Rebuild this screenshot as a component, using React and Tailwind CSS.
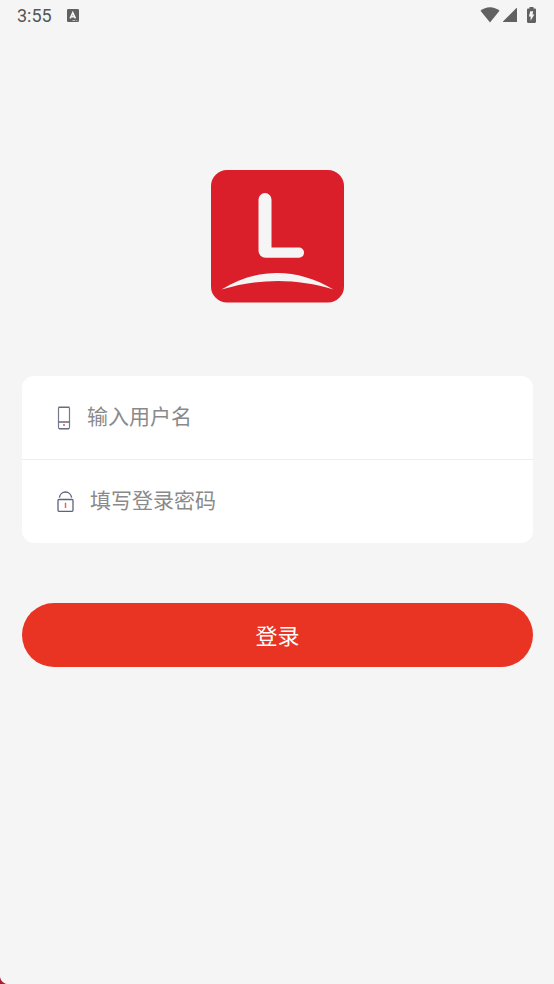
import { useState } from 'react';

const WifiIcon = () => (
  <svg className="h-4 w-5" viewBox="0 0 20 16" fill="#616161" aria-hidden="true">
    <path d="M10 15.5 0.5 3.7C3.2 1.4 6.4 0.2 10 0.2s6.8 1.2 9.5 3.5z" />
  </svg>
);

const SignalIcon = () => (
  <svg className="h-4 w-4" viewBox="0 0 16 16" fill="#616161" aria-hidden="true">
    <path d="M14.2 1.2c.4-.4.8-.3.8.3V15H1.6c-.6 0-.8-.3-.4-.7z" />
  </svg>
);

const BatteryIcon = () => (
  <svg className="h-4 w-[9px]" viewBox="0 0 9 16" aria-hidden="true">
    <path
      d="M2.5 0h4v1.6h1.3c.7 0 1.2.5 1.2 1.1v12.1c0 .7-.5 1.2-1.2 1.2H1.2C.5 16 0 15.5 0 14.8V2.7c0-.6.5-1.1 1.2-1.1h1.3z"
      fill="#616161"
    />
    <path d="M3.2 4.2h3L5.5 7.4h1.8L3.6 13.8V9.6H1.9z" fill="#f4f4f4" />
  </svg>
);

const KeyboardIcon = () => (
  <svg className="h-[13px] w-3" viewBox="0 0 12 13" aria-hidden="true">
    <rect width="12" height="13" rx="1.3" fill="#616161" />
    <path d="M3.2 9.4 5.8 3.6 8.4 9.4M4.2 7.6h3.2" fill="none" stroke="#f4f4f4" strokeWidth="1.6" />
    <path d="M5.5 11.5h2.7M9.3 11.5h1" stroke="#d0d0d0" strokeWidth="0.8" />
  </svg>
);

const Logo = () => (
  <svg className="h-[133px] w-[133px]" viewBox="0 0 133 133" role="img" aria-label="Logo">
    <rect width="133" height="132.5" rx="16" fill="#da1f2a" />
    <path
      d="M47.5 29.5a6.5 6.5 0 0 1 13 0V77.5H88a5.1 5.1 0 0 1 0 10.2H54.5a7 7 0 0 1-7-7z"
      fill="#f5f5f5"
    />
    <path d="M10.5 119.5C46 97.5 86 97.5 122.5 119.5C86 108 48 108 10.5 119.5z" fill="#f5f5f5" />
  </svg>
);

const PhoneIcon = () => (
  <svg className="h-6 w-[14px] shrink-0" viewBox="0 0 14 24" fill="none" aria-hidden="true">
    <rect x="1.5" y="1.5" width="11" height="21" rx="1" stroke="#757a8d" strokeWidth="1.2" />
    <path d="M1.5 1.3h11M1.5 16h11M2 22.7h10" stroke="#666b80" strokeWidth="1.5" />
    <rect x="6" y="18" width="2" height="2" fill="#e58078" />
  </svg>
);

const LockIcon = () => (
  <svg className="h-6 w-[17px] shrink-0" viewBox="0 0 17 24" fill="none" aria-hidden="true">
    <path d="M2.4 7.6C2.8 4.5 5.3 2 8.5 2s5.7 2.5 6.1 5.6" stroke="#5d6379" strokeWidth="1.3" />
    <rect x="1" y="9.5" width="15" height="11.8" rx="1" stroke="#5d6379" strokeWidth="1.3" />
    <path d="M8.5 12.7v5.3" stroke="#e2685c" strokeWidth="1.5" />
  </svg>
);

const inputStyle =
  'min-w-0 flex-1 bg-transparent pb-[6px] text-[21px] leading-8 text-gray-800 placeholder:text-[#8a8a8a] outline-none';

const App = () => {
  const [username, setUsername] = useState('');
  const [password, setPassword] = useState('');

  const handleSubmit = (e) => {
    e.preventDefault();
  };

  return (
    <div className="relative flex min-h-screen flex-col overflow-hidden bg-[#f5f5f5] font-['Noto_Sans_CJK_SC',sans-serif]">
      <header className="flex h-[30px] items-center justify-between pl-[17px] pr-[18px]">
        <div className="flex items-center gap-[15px]">
          <span className="pt-[2px] font-[Roboto,sans-serif] text-[18px] leading-5 text-[#555555]">3:55</span>
          <KeyboardIcon />
        </div>
        <div className="flex items-center">
          <WifiIcon />
          <div className="ml-[2px] mr-[9px]">
            <SignalIcon />
          </div>
          <BatteryIcon />
        </div>
      </header>

      <main className="flex flex-col pl-[22px] pr-[21px] pt-[140px]">
        <div className="flex justify-center">
          <Logo />
        </div>

        <form onSubmit={handleSubmit} className="mt-[73px]">
          <div className="rounded-xl bg-white">
            <div className="flex h-[84px] items-center border-b border-[#eeeeee] pl-[35px] pr-8">
              <label htmlFor="username" aria-label="输入用户名">
                <PhoneIcon />
              </label>
              <input
                id="username"
                type="text"
                placeholder="输入用户名"
                value={username}
                onChange={(e) => setUsername(e.target.value)}
                className={`ml-4 ${inputStyle}`}
              />
            </div>
            <div className="flex h-[83px] items-center pl-[35px] pr-8">
              <label htmlFor="password" aria-label="填写登录密码">
                <LockIcon />
              </label>
              <input
                id="password"
                type="password"
                placeholder="填写登录密码"
                value={password}
                onChange={(e) => setPassword(e.target.value)}
                className={`ml-4 ${inputStyle}`}
              />
            </div>
          </div>

          <button
            type="submit"
            className="mt-[60px] h-16 w-full cursor-pointer rounded-full bg-[#e93323] pb-[2px] text-[22px] leading-8 text-white"
          >
            登录
          </button>
        </form>
      </main>

      <svg className="absolute bottom-0 left-0 h-2 w-2" viewBox="0 0 8 8" aria-hidden="true">
        <path d="M0 0c0 4 3 7.5 7 8H0z" fill="#a81c30" />
      </svg>
    </div>
  );
};

export default App;
